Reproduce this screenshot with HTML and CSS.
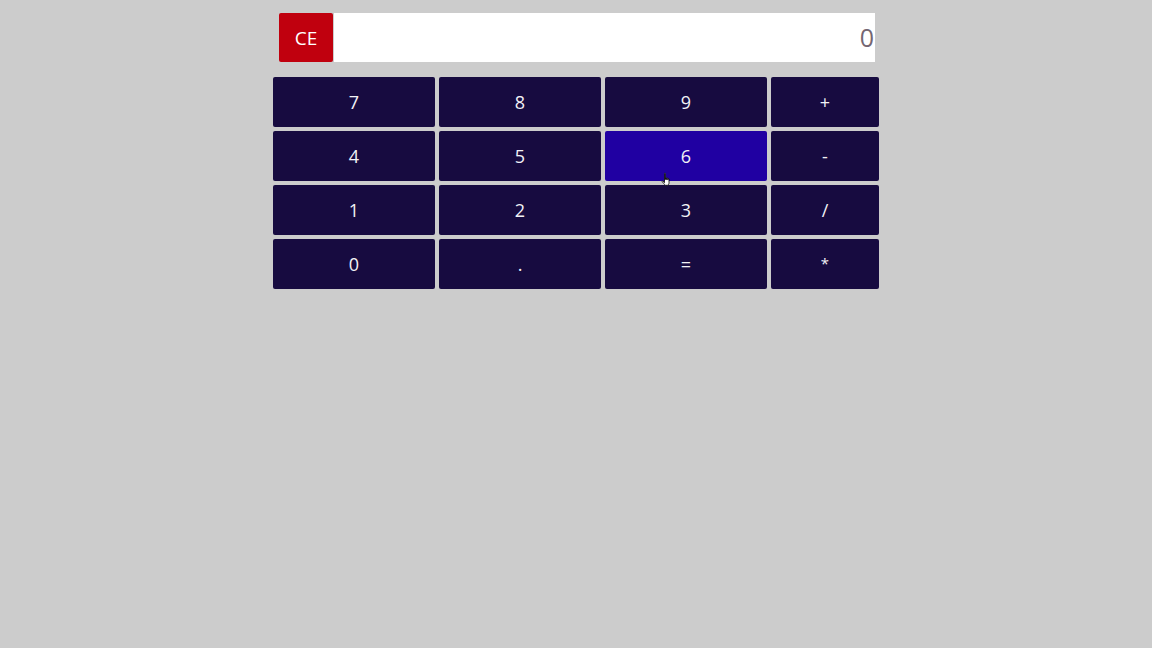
FILE: index.html
```html
<!DOCTYPE html>
<html>
<head>
<meta charset="utf-8">
<link rel="stylesheet" href="styles.css">
</head>
<body>
<div class="calc">
  <div class="top">
    <button class="ce">CE</button>
    <div class="display">0</div>
  </div>
  <div class="keys">
    <button class="key">7</button>
    <button class="key">8</button>
    <button class="key">9</button>
    <button class="key">+</button>
    <button class="key">4</button>
    <button class="key">5</button>
    <button class="key hover">6</button>
    <button class="key">-</button>
    <button class="key">1</button>
    <button class="key">2</button>
    <button class="key">3</button>
    <button class="key">/</button>
    <button class="key">0</button>
    <button class="key">.</button>
    <button class="key">=</button>
    <button class="key"><span class="star">*</span></button>
    <svg class="cursor" width="12" height="16" viewBox="0 0 12 16"><path d="M3.5 1.5c0-.6.9-.6.9 0v6h.3V6c0-.6.9-.6.9 0v1.6h.3V6.6c0-.6.9-.6.9 0v1.2h.3v-.7c0-.6.9-.6.9 0v3.6c0 1.4-.8 2.6-1.8 2.6H4.8c-.7 0-1.3-.7-1.9-1.6L1.2 9.6c-.4-.6.4-1.1.8-.6l1.5 1.6z" fill="#fff" stroke="#000" stroke-width=".8"/></svg>
  </div>
</div>
</body>
</html>
```
FILE: styles.css
```css
html, body {
  margin: 0;
  padding: 0;
  background: #cccccc;
  font-family: "Open Sans", "Noto Sans", sans-serif;
}
.calc {
  width: 606px;
  margin: 0 auto;
  padding-top: 13px;
}
.top {
  display: flex;
  margin: 0 4px 0 6px;
  height: 49px;
}
.ce {
  width: 54px;
  height: 49px;
  border: none;
  border-radius: 2px;
  background: #c0000e;
  color: #ffffff;
  font-family: inherit;
  font-size: 19px;
  padding: 0;
  margin-right: 1px;
}
.display {
  flex: 1;
  background: #ffffff;
  color: #746672;
  font-size: 25px;
  text-align: right;
  line-height: 49px;
  padding-right: 1px;
}
.keys {
  display: grid;
  grid-template-columns: 162px 162px 162px 108px;
  grid-auto-rows: 50px;
  gap: 4px;
  margin-top: 15px;
  position: relative;
}
.key {
  border: none;
  border-radius: 2px;
  background: #170b40;
  color: #f2f2f6;
  font-family: inherit;
  font-size: 18px;
  padding: 0;
}
.star {
  font-size: 15px;
  position: relative;
  top: -2px;
}
.key.hover {
  background: #2000a2;
}
.cursor {
  position: absolute;
  left: 388px;
  top: 95px;
}
```
